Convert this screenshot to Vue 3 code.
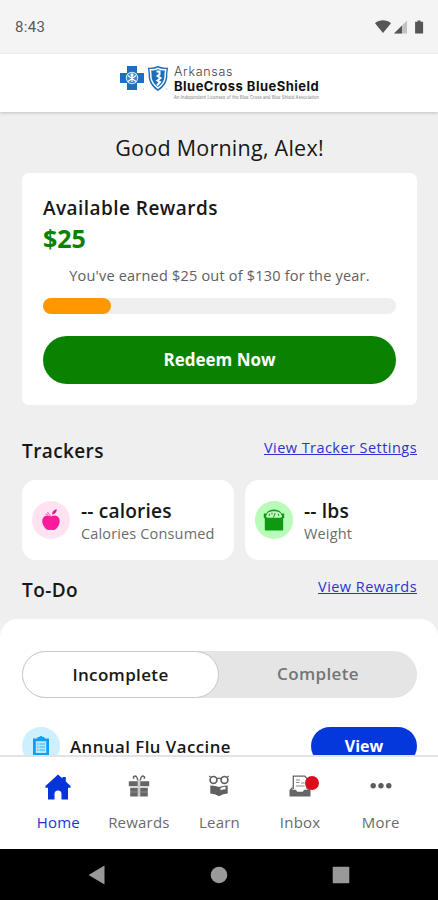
<script setup>
import { ref } from 'vue'

const earned = 25
const total = 130
const tab = ref('incomplete')
const trackers = [
  { id: 'calories', value: '-- calories', label: 'Calories Consumed' },
  { id: 'weight', value: '-- lbs', label: 'Weight' },
]
const navItems = [
  { id: 'home', label: 'Home' },
  { id: 'rewards', label: 'Rewards' },
  { id: 'learn', label: 'Learn' },
  { id: 'inbox', label: 'Inbox' },
  { id: 'more', label: 'More' },
]
</script>

<template>
  <div class="phone">
    <div class="status">
      <span class="clock">8:43</span>
      <svg class="status-icons" width="50" height="16" viewBox="0 0 50 16">
        <path d="M0 4.200C4.800.4 11.200.4 16 4.200L8 14z" fill="#555" />
        <path d="M32 1.500v13H19z" fill="#c2c2c2" />
        <path d="M27 6.500v8h-8z" fill="#555" />
        <path d="M42.500 1.500h3v1.300h2.600v11.700h-8V2.800h2.400z" fill="#555" />
      </svg>
    </div>

    <header class="brand">
      <svg class="marks" width="50" height="27" viewBox="0 0 50 27">
        <path d="M8 1h10v7h7v10h-7v7H8v-7H1V8h7z" fill="#1b6fbd" />
        <circle cx="13" cy="13" r="6.200" fill="#d6e8f7" />
        <circle cx="13" cy="13" r="5.200" fill="#3f87ca" />
        <circle cx="13" cy="9.800" r="1.500" fill="#fff" />
        <path d="M9 10.500l8 6M17 10.500l-8 6M13 11v6" stroke="#fff" stroke-width="1.100" />
        <path d="M29 2.500q4 .8 10-1.500 6 2.300 10 1.500c0 4-1 5-.6 9C48 18 44 23 39 26c-5-3-9-8-9.400-14.500.4-4-.6-5-.6-9z" fill="#1b6fbd" />
        <path d="M31.300 4.800q4 .4 7.700-1.500 3.700 1.900 7.700 1.500c-.2 3-.8 4-.5 7-.4 5-3.200 8.500-7.200 11.300-4-2.800-6.800-6.300-7.200-11.300.3-3-.3-4-.5-7z" fill="none" stroke="#fff" stroke-width="1.500" />
        <path d="M37.500 6.500h3v3l-2 1.500 3 2-3 2.500 2.500 1.500-3 3.500" fill="none" stroke="#fff" stroke-width="2" />
        <circle cx="24.300" cy="24" r=".6" fill="#80b0db" />
        <circle cx="47.700" cy="24" r=".6" fill="#80b0db" />
      </svg>
      <div class="brand-text">
        <span class="brand-state">Arkansas</span>
        <span class="brand-name">BlueCross BlueShield</span>
        <span class="brand-note">An Independent Licensee of the Blue Cross and Blue Shield Association</span>
      </div>
    </header>

    <main class="content">
      <h1 class="greeting">Good Morning, Alex!</h1>

      <section class="rewards-card">
        <h2 class="rewards-title">Available Rewards</h2>
        <div class="amount">${{ earned }}</div>
        <p class="earned">You've earned ${{ earned }} out of ${{ total }} for the year.</p>
        <div class="bar"><div class="bar-fill" :style="{ width: (earned / total) * 100 + '%' }"></div></div>
        <button class="redeem">Redeem Now</button>
      </section>

      <div class="section-head trackers-head">
        <h2>Trackers</h2>
        <a class="settings-link">View Tracker Settings</a>
      </div>
      <div class="trackers">
        <article v-for="t in trackers" :key="t.id" class="tracker">
          <span class="bubble" :class="t.id">
            <svg v-if="t.id === 'calories'" width="20" height="22" viewBox="0 0 20 22">
              <path d="M10 7.500c2-1.200 5-1.400 7 .2 2.400 2.300 2.200 6.500 0 9.800-2 3.300-3.800 4-7 3.200-3.200.8-5 .1-7-3.200C.8 14.200.6 10 3 7.700c2-1.600 5-1.400 7-.2z" fill="#fb1b9b" />
              <path d="M9.500 7L6.500 3M7 5.500L4.500 5" stroke="#fb6bbb" stroke-width="1.200" />
              <path d="M11 5.500C11 2.500 13 .7 15.800.2c0 2.800-1.600 5-4.800 5.300z" fill="#e91596" />
            </svg>
            <svg v-else width="22" height="22" viewBox="0 0 22 22">
              <path d="M.8 4.500h2.700C5 1.500 8 .5 11 .5s6 1 7.500 4h2.700v4.500h-1V20.500q0 1-1 1H2.800q-1 0-1-1V9h-1z" fill="#0d9a12" />
              <path d="M2.800 7.500L4.500 4.200c3-2.600 10-2.600 13 0l1.700 3.300q-1 1.300-2.500 1.300H5.300q-1.500 0-2.500-1.300z" fill="#c5fac3" />
              <path d="M6 7l.8-2.300M9 5.500V3.500M10.500 8.500l1.700-4.500M16 7l-1-2.300" stroke="#0d9a12" stroke-width="1" />
            </svg>
          </span>
          <div class="tracker-text">
            <strong>{{ t.value }}</strong>
            <span>{{ t.label }}</span>
          </div>
        </article>
      </div>

      <div class="section-head todo-head">
        <h2>To-Do</h2>
        <a class="rewards-link">View Rewards</a>
      </div>
      <section class="todo">
        <div class="toggle">
          <button :class="{ on: tab === 'incomplete' }" @click="tab = 'incomplete'">Incomplete</button>
          <button :class="{ on: tab === 'complete' }" @click="tab = 'complete'">Complete</button>
        </div>
        <div class="task">
          <span class="bubble clip">
            <svg width="18" height="20" viewBox="0 0 18 20">
              <path d="M1 2.500h4.500V1h1.700q1.800-1.800 3.600 0h1.700v1.500H17V19.500H1z" fill="#0aa0f4" />
              <path d="M3.800 5.200h10.400v11.800H3.800z" fill="#b9e8ff" />
              <path d="M5 8h1.500M7.500 8H13M5 11h1.500M7.500 11H13M5 14h1.500M7.500 14H13" stroke="#32b2f6" stroke-width="1.200" />
            </svg>
          </span>
          <span class="task-name">Annual Flu Vaccine</span>
          <button class="view">View</button>
        </div>
      </section>
    </main>

    <nav class="tabs">
      <a v-for="n in navItems" :key="n.id" class="tab" :class="{ active: n.id === 'home' }">
        <span class="tab-icon">
          <svg v-if="n.id === 'home'" width="26" height="26" viewBox="0 0 26 26">
            <path d="M13 .5L17.500 4.500V3h3.300v4.500L25.500 12v1.800H23V25.500h-6.500V20a3.500 3.500 0 0 0-7 0v5.500H3V13.800H.5V12z" fill="#0534db" />
          </svg>
          <svg v-else-if="n.id === 'rewards'" width="22" height="22" viewBox="0 0 22 22">
            <path d="M.8 6.300h9v5h-9zM12.200 6.300h9v5h-9zM2.200 12.800h7.600v8.700H2.200zM12.200 12.800h7.600v8.700h-7.600z" fill="#666" />
            <path d="M9.700 5.500C9.500 2 8 .8 6.500 1.200 5 1.600 5 3.200 6.300 3.500M12.300 5.500c.2-3.500 1.700-4.700 3.200-4.300 1.500.4 1.500 2 .2 2.300" fill="none" stroke="#666" stroke-width="1.500" />
            <path d="M11 5v16.500" stroke="#999" stroke-width="1" />
            <path d="M2.200 17h17.600" stroke="#aaa" stroke-width=".6" />
          </svg>
          <svg v-else-if="n.id === 'learn'" width="22" height="22" viewBox="0 0 22 22">
            <circle cx="5.500" cy="4.900" r="3.400" fill="#fff" stroke="#606060" stroke-width="1.700" />
            <circle cx="16.500" cy="4.900" r="3.400" fill="#fff" stroke="#606060" stroke-width="1.700" />
            <path d="M8.500 4q2.500-1.600 5 0M2.500 2L1.300 1M19.500 2l1.200-1" fill="none" stroke="#606060" stroke-width="1.300" />
            <path d="M2.300 10.500q4.700-.2 8.700 1.600 4-1.800 8.700-1.600v8q-4.700 0-8.700 2.800-4-2.800-8.700-2.800z" fill="#606060" />
            <path d="M12.500 13q2.500-1.200 5-1.300v2.500q-2.500 0-5 1z" fill="#fff" />
          </svg>
          <svg v-else-if="n.id === 'inbox'" width="22" height="22" viewBox="0 0 22 22">
            <path d="M4.300 14V1.200h11.500L18 3.500V14" fill="#fff" stroke="#666" stroke-width="1.300" />
            <path d="M7 5h4M7 7.500h3.500M12 8h3.500M7 11h8.500" stroke="#888" stroke-width="1.100" />
            <path d="M.5 15L3.500 11.500v3.300h3.300l1.500 2h5.400l1.500-2h3.300v-3.300l3 3.500v6.500H.5z" fill="#666" />
          </svg>
          <svg v-else width="22" height="22" viewBox="0 0 22 22">
            <circle cx="3.200" cy="10.700" r="2.700" fill="#5c5c5c" />
            <circle cx="11" cy="10.700" r="2.700" fill="#5c5c5c" />
            <circle cx="18.800" cy="10.700" r="2.700" fill="#5c5c5c" />
          </svg>
          <i v-if="n.id === 'inbox'" class="badge"></i>
        </span>
        <span class="tab-label">{{ n.label }}</span>
      </a>
    </nav>

    <div class="system">
      <svg width="18" height="20" viewBox="0 0 18 20"><path d="M.5 10L16.500.5v19z" fill="#999" /></svg>
      <svg width="18" height="20" viewBox="0 0 18 20"><circle cx="9" cy="10" r="8.300" fill="#999" /></svg>
      <svg width="18" height="20" viewBox="0 0 18 20"><rect x=".7" y="1.700" width="16.600" height="16.600" rx=".8" fill="#999" /></svg>
    </div>
  </div>
</template>

<style>
body {
  margin: 0;
}
</style>

<style scoped>
.phone {
  width: 438px;
  height: 900px;
  display: flex;
  flex-direction: column;
  overflow: hidden;
  background: #efefef;
  color: #171717;
  font-family: 'Open Sans', 'Noto Sans', sans-serif;
}
.phone * {
  box-sizing: border-box;
}
h1,
h2,
p {
  margin: 0;
}
button {
  border: 0;
  padding: 0;
  font: inherit;
}
svg {
  display: block;
  flex: none;
}
.status {
  flex: none;
  height: 54px;
  padding: 0 13px 0 15px;
  display: flex;
  justify-content: space-between;
  align-items: center;
  background: #f4f4f4;
}
.clock {
  font-family: Roboto, sans-serif;
  font-size: 15px;
  letter-spacing: 0.300px;
  color: #5a5a5a;
}
.brand {
  flex: none;
  height: 58px;
  display: flex;
  padding: 11px 0 0 119px;
  gap: 5px;
  background: #fff;
  box-shadow: 0 1px 3px rgba(0, 0, 0, 0.200);
  z-index: 1;
}
.brand-text {
  display: flex;
  flex-direction: column;
  white-space: nowrap;
  font-family: Inter, sans-serif;
}
.brand-state {
  font-size: 12.500px;
  line-height: 13px;
  letter-spacing: 0.700px;
  font-weight: 300;
  color: #444;
}
.brand-name {
  font-size: 13px;
  line-height: 16px;
  font-weight: 700;
  letter-spacing: 0.470px;
  color: #111;
}
.brand-note {
  font-size: 4.200px;
  line-height: 7px;
  letter-spacing: 0.050px;
  color: #777;
}
.content {
  flex: 1;
  min-height: 0;
  overflow: hidden;
  display: flex;
  flex-direction: column;
}
.greeting {
  flex: none;
  height: 61px;
  padding: 21px 0 0 1px;
  text-align: center;
  font-size: 21.500px;
  line-height: 30px;
  font-weight: 400;
  letter-spacing: 0.250px;
}
.rewards-card {
  flex: none;
  margin: 0 21px 0 22px;
  height: 232px;
  padding: 22px 21px 0;
  border-radius: 7px;
  background: #fff;
}
.rewards-title {
  font-size: 19px;
  line-height: 26px;
  font-weight: 600;
  letter-spacing: 0.450px;
}
.amount {
  font-size: 25px;
  line-height: 34px;
  font-weight: 700;
  color: #0a8200;
}
.earned {
  padding-top: 10px;
  text-align: center;
  font-size: 14.500px;
  line-height: 22px;
  letter-spacing: 0.200px;
  color: #606060;
}
.bar {
  margin-top: 11px;
  height: 16px;
  border-radius: 8px;
  background: #efefef;
}
.bar-fill {
  height: 16px;
  border-radius: 8px;
  background: #ff9800;
}
.redeem {
  display: block;
  width: 100%;
  height: 48px;
  margin-top: 22px;
  padding-bottom: 1px;
  border-radius: 24px;
  background: #0a8200;
  color: #fff;
  font-size: 17px;
  font-weight: 700;
}
.section-head {
  flex: none;
  display: flex;
  justify-content: space-between;
  padding: 0 21px 0 22px;
}
.section-head h2 {
  font-size: 19px;
  line-height: 28px;
  font-weight: 600;
  letter-spacing: 0.400px;
}
.section-head a {
  font-size: 14.500px;
  line-height: 22px;
  font-weight: 500;
  letter-spacing: 0.450px;
  color: #2b32cf;
  text-decoration: underline;
  text-decoration-thickness: 1px;
  text-underline-offset: 1px;
}
.trackers-head {
  height: 75px;
  padding-top: 32px;
}
.trackers {
  flex: none;
  display: flex;
  gap: 11px;
  padding-left: 22px;
}
.tracker {
  flex: none;
  width: 212px;
  height: 80px;
  padding-left: 10px;
  display: flex;
  align-items: center;
  gap: 11px;
  border-radius: 14px;
  background: #fff;
}
.bubble {
  flex: none;
  width: 38px;
  height: 38px;
  border-radius: 50%;
  display: flex;
  align-items: center;
  justify-content: center;
}
.calories {
  background: #ffe3f1;
}
.weight {
  background: #b9fbb8;
}
.clip {
  background: #cdeffe;
}
.tracker-text {
  display: flex;
  flex-direction: column;
  padding-top: 4px;
  white-space: nowrap;
}
.tracker-text strong {
  font-size: 19.200px;
  line-height: 23px;
  font-weight: 600;
  letter-spacing: 0.150px;
}
.tracker-text span {
  font-size: 14.500px;
  line-height: 24px;
  letter-spacing: 0.150px;
  color: #6c6c6c;
}
.todo-head {
  height: 59px;
  padding-top: 16px;
}
.todo {
  flex: 1;
  min-height: 0;
  padding: 32px 21px 0 22px;
  border-radius: 18px 18px 0 0;
  background: #fff;
}
.toggle {
  display: flex;
  height: 47px;
  border-radius: 24px;
  background: #e5e5e5;
}
.toggle button {
  flex: 1;
  padding-bottom: 2px;
  border-radius: 24px;
  background: none;
  color: #757575;
  font-size: 17px;
  font-weight: 600;
  letter-spacing: 0.350px;
}
.toggle .on {
  flex: none;
  width: 197px;
  padding-bottom: 0;
  border: 1px solid #c8c8c8;
  background: #fff;
  color: #171717;
}
.task {
  display: flex;
  align-items: center;
  height: 38px;
  margin-top: 29px;
}
.task-name {
  flex: 1;
  padding-left: 10px;
  font-size: 16.800px;
  font-weight: 600;
  letter-spacing: 0.480px;
  white-space: nowrap;
}
.view {
  width: 106px;
  height: 38px;
  border-radius: 19px;
  background: #0538dc;
  color: #fff;
  font-size: 16px;
  font-weight: 700;
}
.tabs {
  flex: none;
  height: 94px;
  padding: 0 17px 0 18px;
  border-top: 2px solid #e3e3e3;
  display: flex;
  background: #fff;
}
.tab {
  flex: 1 1 0;
  min-width: 0;
  display: flex;
  flex-direction: column;
  align-items: center;
  color: #6a6a6a;
}
.tab-icon {
  position: relative;
  height: 54px;
  padding-top: 18px;
}
.active .tab-icon {
  padding-top: 17px;
}
.tab-label {
  font-size: 15px;
  line-height: 22px;
  letter-spacing: 0.200px;
}
.active {
  color: #1734d8;
}
.badge {
  position: absolute;
  left: 16px;
  top: 19px;
  width: 14px;
  height: 14px;
  border-radius: 50%;
  background: #dc0b19;
}
.system {
  flex: none;
  height: 51px;
  padding: 0 88px;
  display: flex;
  justify-content: space-between;
  align-items: center;
  background: #000;
}
</style>
